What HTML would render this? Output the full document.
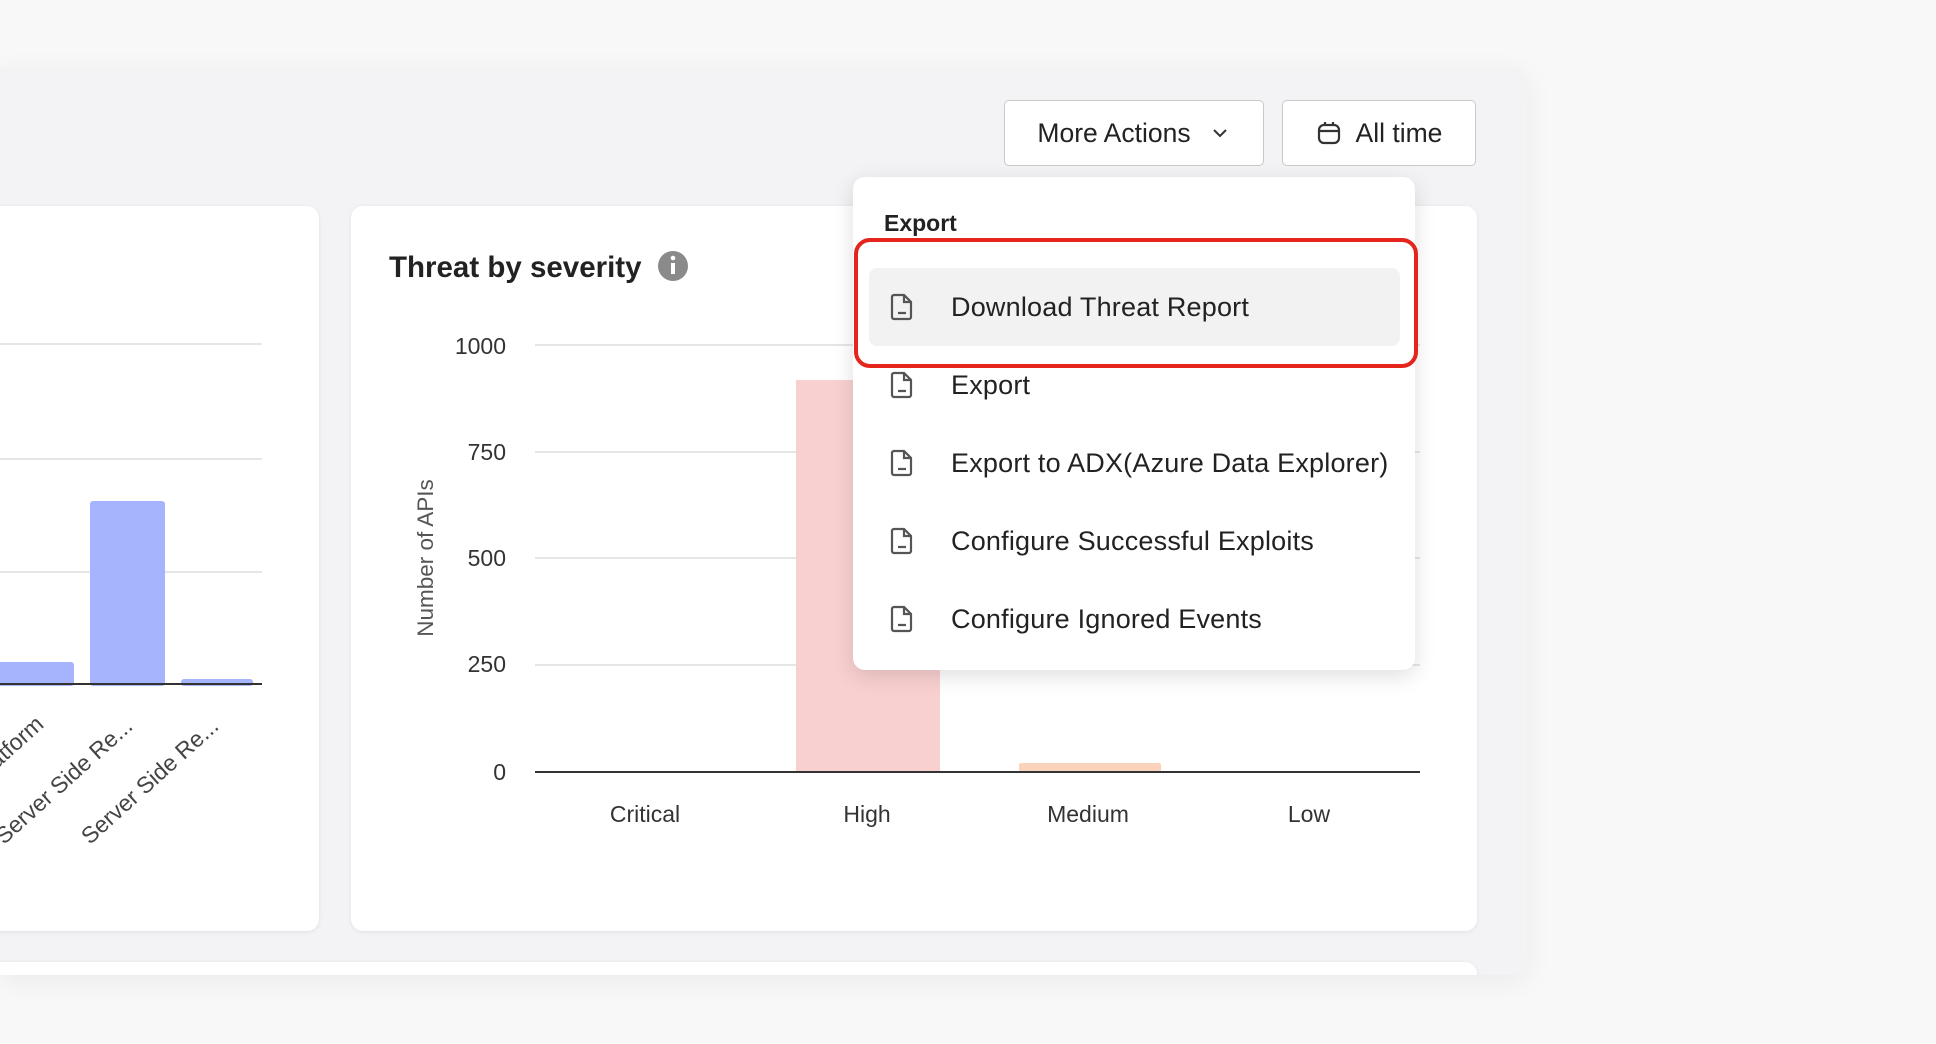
<!DOCTYPE html>
<html><head><meta charset="utf-8"><style>
*{margin:0;padding:0;box-sizing:border-box}
body{width:1936px;height:1044px;background:#f8f8f8;font-family:"Liberation Sans",Arial,sans-serif;position:relative;overflow:hidden;color:#222}
.abs{position:absolute}
.panel{left:0;top:68px;width:1527px;height:907px;background:#f3f3f5;border-radius:0 14px 14px 0;box-shadow:0 6px 30px rgba(0,0,0,0.06);overflow:hidden}
.card{background:#fff;border-radius:12px;box-shadow:0 1px 4px rgba(0,0,0,0.08)}
.btn{background:#fff;border:1.5px solid #c9c9c9;border-radius:5px;font-size:26.5px;color:#222;display:flex;align-items:center;justify-content:center}
.menu{left:853px;top:177px;width:562px;height:493px;background:#fff;border-radius:12px;box-shadow:0 6px 22px rgba(0,0,0,0.13)}
.item{position:absolute;left:16px;width:531px;height:78px;display:flex;align-items:center;font-size:27px;letter-spacing:0.2px;color:#222}
.item svg{margin-left:21px;margin-right:37px}
</style></head><body>
<div class="abs panel"><div class="abs card" style="left:-20px;top:894px;width:1497px;height:40px;border-radius:12px 12px 0 0"></div></div>
<div class="abs card" style="left:-20px;top:206px;width:339px;height:725px"></div>
<div class="abs card" style="left:351px;top:206px;width:1126px;height:725px"></div>

<svg class="abs" style="left:0;top:0" width="1936" height="1044">
 <g stroke="#e6e6e6" stroke-width="2"><line x1="0" y1="344" x2="262" y2="344"/><line x1="0" y1="459" x2="262" y2="459"/><line x1="0" y1="572" x2="262" y2="572"/></g>
 <rect x="-4" y="662" width="78" height="24" rx="3" fill="#a5b4fc"/>
 <rect x="90" y="501" width="75" height="185" rx="3" fill="#a5b4fc"/>
 <rect x="181" y="679" width="72" height="7" rx="3" fill="#a5b4fc"/>
 <line x1="0" y1="684" x2="262" y2="684" stroke="#333" stroke-width="2"/>
 <g font-size="23" fill="#444" text-anchor="end">
  <text transform="translate(45,726) rotate(-42)">Platform</text>
  <text transform="translate(134,728) rotate(-42)">Server Side Re...</text>
  <text transform="translate(220,728) rotate(-42)">Server Side Re...</text>
 </g>
 <text x="389" y="277" font-size="29.5" font-weight="bold" fill="#222">Threat by severity</text>
 <circle cx="673" cy="266" r="15" fill="#8a8a8a"/>
 <rect x="671" y="263" width="4" height="11" fill="#fff"/><circle cx="673" cy="258" r="2.3" fill="#fff"/>
 <g stroke="#e6e6e6" stroke-width="2"><line x1="535" y1="345" x2="1420" y2="345"/><line x1="535" y1="452" x2="1420" y2="452"/><line x1="535" y1="558" x2="1420" y2="558"/><line x1="535" y1="665" x2="1420" y2="665"/></g>
 <rect x="796" y="380" width="144" height="392" fill="#f9d0d0"/>
 <rect x="1019" y="763" width="142" height="9" rx="2" fill="#fbd3bd"/>
 <line x1="535" y1="772" x2="1420" y2="772" stroke="#333" stroke-width="2"/>
 <g font-size="23" fill="#333" text-anchor="end">
  <text x="506" y="354">1000</text><text x="506" y="460">750</text><text x="506" y="566">500</text><text x="506" y="672">250</text><text x="506" y="780">0</text>
 </g>
 <text transform="translate(433,558) rotate(-90)" font-size="22.5" fill="#555" text-anchor="middle">Number of APIs</text>
 <g font-size="23" fill="#333" text-anchor="middle">
  <text x="645" y="822">Critical</text><text x="867" y="822">High</text><text x="1088" y="822">Medium</text><text x="1309" y="822">Low</text>
 </g>
</svg>

<div class="abs btn" style="left:1004px;top:100px;width:260px;height:66px">More Actions
 <svg width="22" height="22" viewBox="0 0 22 22" style="margin-left:18px"><path d="M5 8l6 6 6-6" fill="none" stroke="#333" stroke-width="2"/></svg></div>
<div class="abs btn" style="left:1282px;top:100px;width:194px;height:66px">
 <svg width="26" height="26" viewBox="0 0 26 26" style="margin-right:14px"><rect x="3" y="5" width="20" height="18" rx="5" fill="none" stroke="#333" stroke-width="2.2"/><line x1="3" y1="11" x2="23" y2="11" stroke="#333" stroke-width="2.2"/><line x1="9" y1="2" x2="9" y2="6" stroke="#333" stroke-width="2.2"/><line x1="17" y1="2" x2="17" y2="6" stroke="#333" stroke-width="2.2"/></svg>All time</div>

<div class="abs menu">
 <div class="abs" style="left:31px;top:33px;font-size:23px;font-weight:bold;color:#222">Export</div>
 <div class="item" style="top:91px;background:#f2f2f3;border-radius:8px"><svg width="24" height="28" viewBox="0 0 24 28"><path d="M4 2h10l7 7v15a2 2 0 0 1-2 2H4a2 2 0 0 1-2-2V4a2 2 0 0 1 2-2z M14 2v7h7 M8 20h8" fill="none" stroke="#555" stroke-width="2.2"/></svg>Download Threat Report</div>
 <div class="item" style="top:169px"><svg width="24" height="28" viewBox="0 0 24 28"><path d="M4 2h10l7 7v15a2 2 0 0 1-2 2H4a2 2 0 0 1-2-2V4a2 2 0 0 1 2-2z M14 2v7h7 M8 20h8" fill="none" stroke="#555" stroke-width="2.2"/></svg>Export</div>
 <div class="item" style="top:247px"><svg width="24" height="28" viewBox="0 0 24 28"><path d="M4 2h10l7 7v15a2 2 0 0 1-2 2H4a2 2 0 0 1-2-2V4a2 2 0 0 1 2-2z M14 2v7h7 M8 20h8" fill="none" stroke="#555" stroke-width="2.2"/></svg>Export to ADX(Azure Data Explorer)</div>
 <div class="item" style="top:325px"><svg width="24" height="28" viewBox="0 0 24 28"><path d="M4 2h10l7 7v15a2 2 0 0 1-2 2H4a2 2 0 0 1-2-2V4a2 2 0 0 1 2-2z M14 2v7h7 M8 20h8" fill="none" stroke="#555" stroke-width="2.2"/></svg>Configure Successful Exploits</div>
 <div class="item" style="top:403px"><svg width="24" height="28" viewBox="0 0 24 28"><path d="M4 2h10l7 7v15a2 2 0 0 1-2 2H4a2 2 0 0 1-2-2V4a2 2 0 0 1 2-2z M14 2v7h7 M8 20h8" fill="none" stroke="#555" stroke-width="2.2"/></svg>Configure Ignored Events</div>
</div>
<div class="abs" style="left:854px;top:238px;width:564px;height:130px;border:4px solid #e5241b;border-radius:16px"></div>
</body></html>
